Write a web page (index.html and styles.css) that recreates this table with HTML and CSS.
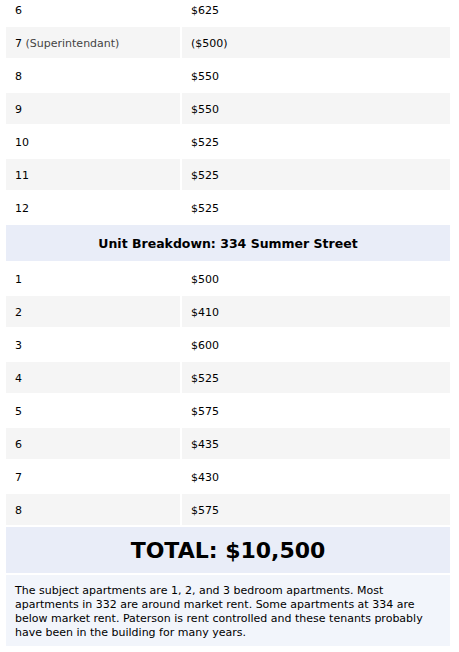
FILE: index.html
```html
<!DOCTYPE html>
<html>
<head>
<meta charset="utf-8">
<link rel="stylesheet" href="styles.css">
</head>
<body>
<table class="units">
  <tr><td class="unit">6</td><td>$625</td></tr>
  <tr class="alt"><td class="unit">7 <span class="note">(Superintendant)</span></td><td>($500)</td></tr>
  <tr><td class="unit">8</td><td>$550</td></tr>
  <tr class="alt"><td class="unit">9</td><td>$550</td></tr>
  <tr><td class="unit">10</td><td>$525</td></tr>
  <tr class="alt"><td class="unit">11</td><td>$525</td></tr>
  <tr><td class="unit">12</td><td>$525</td></tr>
  <tr><th class="section" colspan="2">Unit Breakdown: 334 Summer Street</th></tr>
  <tr><td class="unit">1</td><td>$500</td></tr>
  <tr class="alt"><td class="unit">2</td><td>$410</td></tr>
  <tr><td class="unit">3</td><td>$600</td></tr>
  <tr class="alt"><td class="unit">4</td><td>$525</td></tr>
  <tr><td class="unit">5</td><td>$575</td></tr>
  <tr class="alt"><td class="unit">6</td><td>$435</td></tr>
  <tr><td class="unit">7</td><td>$430</td></tr>
  <tr class="alt"><td class="unit">8</td><td>$575</td></tr>
  <tr><th class="total" colspan="2">TOTAL: $10,500</th></tr>
  <tr><td class="summary" colspan="2">The subject apartments are 1, 2, and 3 bedroom apartments. Most apartments in 332 are around market rent. Some apartments at 334 are below market rent. Paterson is rent controlled and these tenants probably have been in the building for many years.</td></tr>
</table>
</body>
</html>
```
FILE: styles.css
```css
html, body {
  margin: 0;
  padding: 0;
  background: #ffffff;
}
body {
  font-family: Verdana, "DejaVu Sans", sans-serif;
  font-size: 11px;
  color: #000000;
}
.units {
  border-collapse: separate;
  border-spacing: 2px;
  width: 448px;
  margin: -8px 0 0 4px;
}
.units td {
  height: 31px;
  padding: 1px 9px 0;
  vertical-align: middle;
  box-sizing: border-box;
}
.units td.unit {
  width: 174px;
}
.alt td {
  background: #f5f5f5;
}
.note {
  color: #444444;
}
.section {
  height: 34px;
  background: #e9edf8;
  font-size: 12.5px;
  font-weight: bold;
  text-align: center;
  color: #000;
}
.total {
  height: 44px;
  background: #e9edf8;
  font-size: 22px;
  font-weight: bold;
  text-align: center;
  color: #000;
}
.units td.summary {
  height: auto;
  background: #f2f5fb;
  padding: 9px 9px 6px;
  line-height: 14px;
  color: #000;
}
```
